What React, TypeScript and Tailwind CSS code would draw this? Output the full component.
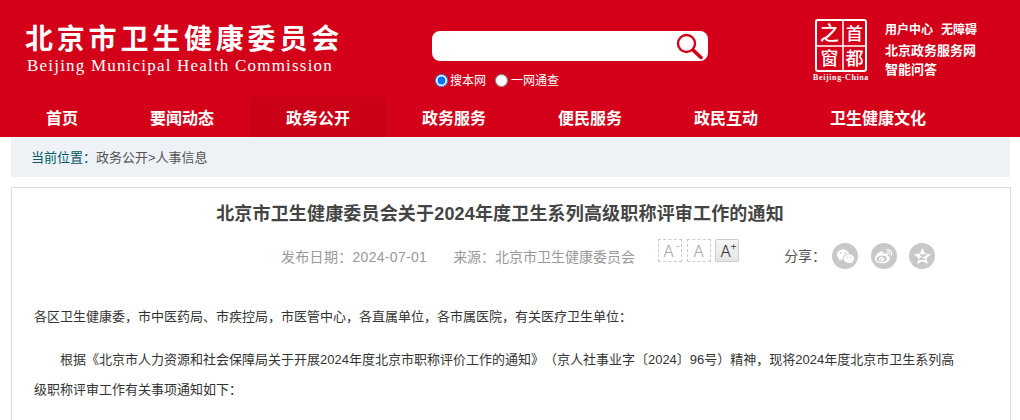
import { RiWechatFill, RiWeiboFill } from "react-icons/ri";

const NAV = ["首页", "要闻动态", "政务公开", "政务服务", "便民服务", "政民互动", "卫生健康文化"];

function SearchIcon() {
  return (
    <svg width="28" height="28" viewBox="0 0 28 28" fill="none" stroke="#d40019">
      <circle cx="11.5" cy="11.5" r="8.5" strokeWidth="2.4" />
      <path d="M18 18l8 7.5" strokeWidth="3.6" strokeLinecap="round" />
    </svg>
  );
}

function Stamp() {
  const font = "'Noto Sans CJK SC'";
  return (
    <div className="flex w-[60px] flex-col items-center">
      <svg width="52" height="53" viewBox="0 0 52 53">
        <rect x="1" y="1" width="50" height="51" rx="2" fill="none" stroke="#fff" strokeWidth="2" />
        <path d="M28 2v49M2 27h48" stroke="#fff" strokeWidth="1.5" />
        <text x="14.5" y="21" fontSize="19" fontWeight="500" textAnchor="middle" fill="#fff" fontFamily={font}>之</text>
        <text x="39.5" y="21" fontSize="17" fontWeight="500" textAnchor="middle" fill="#fff" fontFamily={font}>首</text>
        <text x="14.5" y="46" fontSize="18" fontWeight="500" textAnchor="middle" fill="#fff" fontFamily={font}>窗</text>
        <text x="39.5" y="46" fontSize="18" fontWeight="500" textAnchor="middle" fill="#fff" fontFamily={font}>都</text>
      </svg>
      <span className="mt-[1px] whitespace-nowrap font-['Liberation_Serif',serif] text-[8px] font-bold leading-[10px] tracking-[0.6px] text-white">Beijing-China</span>
    </div>
  );
}

function SizeButton({ sup, active }: { sup?: string; active?: boolean }) {
  return (
    <span
      className={
        active
          ? "relative flex h-[23px] w-6 items-center justify-center rounded-[2px] border border-[#ccc] bg-gradient-to-b from-[#f6f6f6] to-[#e4e4e4] font-['Inter',sans-serif] text-[16px] font-light text-[#333]"
          : "relative flex h-[23px] w-6 items-center justify-center border border-dashed border-[#ccc] font-['Inter',sans-serif] text-[16px] font-light text-[#aaa]"
      }
    >
      <span className={sup ? "mr-[3px] mt-[2px]" : "mt-[2px]"}>A</span>
      {sup && <span className="absolute right-[1px] top-[1px] text-[11px] leading-[10px]">{sup}</span>}
    </span>
  );
}

export default function App() {
  return (
    <div className="h-[420px] w-[1020px] overflow-hidden bg-white font-['Liberation_Sans','Noto_Sans_CJK_SC',sans-serif] [text-spacing-trim:space-all]">
      <header className="bg-[#d40019] text-white">
        <div className="flex h-[97px]">
          <div className="ml-[25px] w-[407px] shrink-0 pt-[18px]">
            <div className="whitespace-nowrap font-['Noto_Sans_CJK_SC',sans-serif] text-[28px] font-bold leading-[38px] tracking-[3.8px]">北京市卫生健康委员会</div>
            <div className="ml-[2px] whitespace-nowrap font-['Liberation_Serif',serif] text-[17px] leading-[20px] tracking-[1.2px]">Beijing Municipal Health Commission</div>
          </div>
          <div className="w-[380px] shrink-0 pt-[31px]">
            <div className="flex h-[30px] w-[276px] items-center justify-end rounded-[8px] bg-white pr-[5px]">
              <SearchIcon />
            </div>
            <div className="mt-[10px] flex items-center text-[12px] leading-[18px]">
              <input type="radio" name="scope" defaultChecked className="m-0 ml-[3px]" />
              <span className="ml-[2px] mt-[1px]">搜本网</span>
              <input type="radio" name="scope" className="m-0 ml-[9px]" />
              <span className="ml-[3px] mt-[1px]">一网通查</span>
            </div>
          </div>
          <div className="ml-[-1px] flex w-[200px] shrink-0 pt-[19px]">
            <Stamp />
            <div className="ml-[14px] mt-[2px] flex flex-col text-[13px] font-bold leading-[19.5px]">
              <span className="flex gap-2 text-[12px]">
                <span>用户中心</span>
                <span>无障碍</span>
              </span>
              <span>北京政务服务网</span>
              <span>智能问答</span>
            </div>
          </div>
        </div>
        <nav className="flex h-10 pl-[10px]">
          {NAV.map((item) => (
            <a
              key={item}
              className={
                item === "政务公开"
                  ? "bg-[#c90016] px-9 text-[16px] font-bold leading-[43px]"
                  : "px-9 text-[16px] font-bold leading-[43px]"
              }
            >
              {item}
            </a>
          ))}
        </nav>
      </header>

      <div className="mx-[11px] flex h-10 w-[999px] items-center bg-[#eef1f5] pl-5 pt-[1px] text-[13px] text-[#555]">
        <span className="text-[#005a6a]">当前位置：</span>政务公开&gt;人事信息
      </div>

      <main className="mx-[11px] mt-[10px] h-[300px] w-[1000px] border border-[#ddd] text-[#333]">
        <h1 className="mt-[14px] pr-[22px] text-center text-[18px] font-bold leading-[24px] tracking-[0.17px] text-[#444]">北京市卫生健康委员会关于2024年度卫生系列高级职称评审工作的通知</h1>
        <div className="mt-[14px] flex h-7 items-center text-[14px] text-[#999]">
          <span className="ml-[269px] mt-[6px] tracking-[0.3px]">发布日期：2024-07-01</span>
          <span className="ml-[26px] mt-[6px]">来源：北京市卫生健康委员会</span>
          <div className="ml-[23px] mt-[-8px] flex gap-[4.5px]">
            <SizeButton sup="-" />
            <SizeButton />
            <SizeButton sup="+" active />
          </div>
          <span className="ml-[45px] mt-[4px] text-[#555]">分享：</span>
          <div className="ml-[6px] mt-[4px] flex gap-[12.5px]">
            <span className="flex h-[26px] w-[26px] items-center justify-center rounded-full bg-[#c8c8c8] text-white">
              <RiWechatFill size={19} />
            </span>
            <span className="flex h-[26px] w-[26px] items-center justify-center rounded-full bg-[#c8c8c8] text-white">
              <RiWeiboFill size={19} />
            </span>
            <span className="flex h-[26px] w-[26px] items-center justify-center rounded-full bg-[#c8c8c8]">
              <svg width="19" height="19" viewBox="0 0 18 18">
                <path d="M9 1l2.4 5.2 5.6.6-4.2 3.8 1.2 5.6L9 13.4l-5 2.8 1.2-5.6L1 6.8l5.6-.6z" fill="#fff" />
                <path d="M6.5 7.5h5l-5 4h5" fill="none" stroke="#c8c8c8" strokeWidth="1.4" />
              </svg>
            </span>
          </div>
        </div>
        <div className="mt-[34px] pl-[22px] pr-[46px] text-[13px] leading-[30px]">
          <p>各区卫生健康委，市中医药局、市疾控局，市医管中心，各直属单位，各市属医院，有关医疗卫生单位：</p>
          <p className="mt-[13px] indent-[26px]">根据《北京市人力资源和社会保障局关于开展2024年度北京市职称评价工作的通知》（京人社事业字〔2024〕96号）精神，现将2024年度北京市卫生系列高级职称评审工作有关事项通知如下：</p>
        </div>
      </main>
    </div>
  );
}
